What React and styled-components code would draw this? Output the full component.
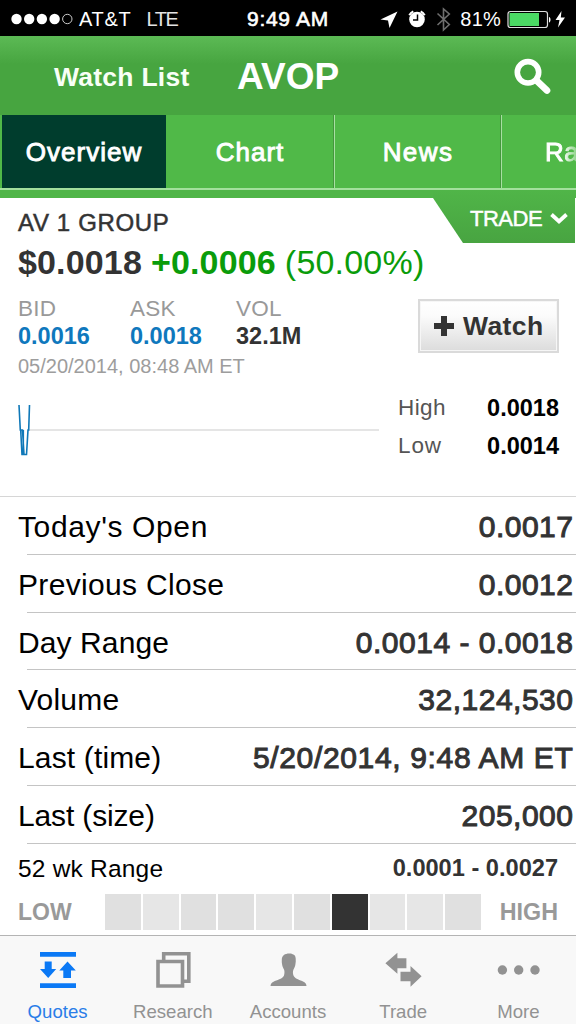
import React from "react";
import styled, { createGlobalStyle } from "styled-components";

const Global = createGlobalStyle`
  * { box-sizing: border-box; }
  body { margin: 0; background: #fff; font-family: "Liberation Sans", Arial, sans-serif; }
`;

const Screen = styled.div`
  width: 576px;
  height: 1024px;
  display: flex;
  flex-direction: column;
  overflow: hidden;
  background: #fff;
`;

const Label = styled.span`
  display: block;
  white-space: nowrap;
  font-size: ${(p) => p.$size}px;
  line-height: ${(p) => p.$line || 30}px;
  font-weight: ${(p) => (p.$bold ? 700 : 400)};
  color: ${(p) => p.$color || "#000"};
  letter-spacing: ${(p) => p.$track || 0}px;
  -webkit-text-stroke: ${(p) => p.$stroke || 0}px ${(p) => p.$color || "#000"};
`;

const StatusBar = styled.div`
  height: 36px;
  flex: none;
  background: #000;
  display: grid;
  grid-template-columns: 247px 1fr auto;
  padding: 1px 9px 0 0;
`;

const StatusGroup = styled.div`
  display: flex;
  align-items: center;
  padding-left: ${(p) => p.$inset || 0}px;
  gap: ${(p) => p.$gap || 0}px;
`;

const Header = styled.header`
  height: 79px;
  flex: none;
  display: flex;
  padding: 0 25px 0 54px;
  background: linear-gradient(#5cba55 0, #50ae49 16px, #47a540 28px, #47a540 100%);
`;

const BackLink = styled.div`
  width: 183px;
  padding-top: 26px;
`;

const Title = styled.div`
  flex: 1;
  padding-top: 25px;
`;

const Search = styled.svg`
  margin-top: 22px;
`;

const Tabs = styled.nav`
  height: 75px;
  flex: none;
  display: flex;
  overflow: hidden;
  padding-left: 2px;
  background: #50b948;
  border-bottom: 2px solid #a3e09d;
`;

const Tab = styled.div`
  width: ${(p) => p.$width}px;
  flex: none;
  display: flex;
  justify-content: ${(p) => (p.$start ? "flex-start" : "center")};
  padding: 22px 0 0 ${(p) => p.$inset || 0}px;
  background: ${(p) => (p.$active ? "#003d2d" : "transparent")};
  border-left: ${(p) => (p.$divided ? "1px solid #a8dfa3" : "none")};
  box-shadow: ${(p) => (p.$divided ? "-1px 0 0 #43983c" : "none")};
`;

const Fade = styled.div`
  mask-image: linear-gradient(90deg, #000 18px, rgba(0, 0, 0, 0.25) 34px);
`;

const TradeStrip = styled.div`
  height: 8px;
  flex: none;
  background: #50b548;
  display: flex;
  justify-content: flex-end;
  align-items: flex-start;
`;

const TradeTab = styled.div`
  width: 142px;
  height: 53px;
  flex: none;
  margin-right: 1px;
  padding: 14px 7px 0 37px;
  display: flex;
  align-items: flex-start;
  justify-content: space-between;
  background: linear-gradient(#50b548, #48a441);
  clip-path: polygon(0 0, 100% 0, 100% 100%, 30px 100%, 0 8px);
`;

const Chevron = styled.svg`
  margin-top: 9px;
`;

const Quote = styled.section`
  height: 299px;
  flex: none;
  padding: 10px 17px 0 18px;
  border-bottom: 1px solid #d6d6d6;
`;

const PriceLine = styled.div`
  display: flex;
  height: 46px;
  gap: 9px;
  padding-top: 1px;
`;

const Detail = styled.div`
  display: flex;
  justify-content: space-between;
  align-items: flex-start;
  height: 98px;
`;

const Stats = styled.div`
  display: grid;
  grid-template-columns: 112px 106px auto;
  padding-top: 12px;
`;

const WatchButton = styled.button`
  width: 141px;
  height: 54px;
  margin-top: 15px;
  padding: 0 0 0 14px;
  display: flex;
  align-items: center;
  gap: 9px;
  border: 2px solid #dadada;
  background: linear-gradient(#fff 0, #fbfbfb 30%, #dcdcdc 100%);
  box-shadow: inset 0 0 0 1px #f6f6f6;
  font-family: inherit;
`;

const ChartRow = styled.div`
  display: flex;
  justify-content: space-between;
  align-items: flex-start;
  padding-top: 8px;
`;

const HighLow = styled.dl`
  width: 161px;
  margin: 3px 0 0;
  display: grid;
  grid-template-columns: 1fr auto;
  row-gap: 8px;
`;

const Rows = styled.section`
  flex: none;
  padding-left: 18px;
`;

const Row = styled.div`
  height: 57.75px;
  display: flex;
  justify-content: space-between;
  padding: 15px 2.5px 0 0;
  background: linear-gradient(#c4c4c4, #c4c4c4) 9px 100% / 100% 1px no-repeat;
`;

const RangeHead = styled.div`
  display: flex;
  justify-content: space-between;
  flex: none;
  height: 50px;
  padding: 9px 18px 0 18px;
`;

const RangeBar = styled.div`
  display: flex;
  flex: 1;
  padding: 0 18px 0 18px;
`;

const Low = styled.div`
  width: 87px;
`;

const Cells = styled.div`
  display: grid;
  grid-template-columns: repeat(10, 1fr);
  gap: 2px;
  width: 376px;
  height: 36px;
  margin-right: auto;
`;

const Cell = styled.div`
  background: ${(p) => (p.$on ? "#333" : p.$alt ? "#e6e6e6" : "#e0e0e0")};
`;

const TabBar = styled.nav`
  height: 89px;
  flex: none;
  display: grid;
  grid-template-columns: repeat(5, 1fr);
  background: #f8f8f8;
  border-top: 1px solid #b4b4b4;
`;

const TabItem = styled.div`
  display: flex;
  flex-direction: column;
  align-items: center;
  padding-top: 12px;
`;

const rows = [
  ["Today's Open", "0.0017", 0.62],
  ["Previous Close", "0.0012", 0.33],
  ["Day Range", "0.0014 - 0.0018", 0.1],
  ["Volume", "32,124,530", 0.2],
  ["Last (time)", "5/20/2014, 9:48 AM ET", 0.15, 0.65],
  ["Last (size)", "205,000", -0.15],
];

const gray = "#929292";

const tabIcons = {
  Quotes: (
    <path
      fill="#0b79f5"
      d="M2 4h36v4.700H2zM2 35.200h36v4.700H2zM6.700 13.500h7v7.500h4.500L10.200 30 2 21h4.700zM25.300 30v-7.500h-4L29.500 13.500 37.800 22.500H33V30z"
    />
  ),
  Research: (
    <g fill="none" stroke={gray} strokeWidth="3.600">
      <path d="M10.700 12V5.800H35.800V33.300H30" />
      <path d="M5 13.500h24.500V38H5z" />
    </g>
  ),
  Accounts: (
    <path
      fill={gray}
      d="M23 5.500c-5-.6-9.300 1.200-9.200 6.500 0 1-.1 2.500.3 4.500.4 2.500 1.300 3.500 2.100 5.500.5 2 .3 4-.4 6C14 31 9 32 5.500 33.700 3.500 34.700 2.600 36 2.500 38h36c-.1-2-1-3.300-3-4.300-3.500-1.700-8-2.700-9.800-5.700-.9-2-1-4-.4-6 .8-2 1.700-3 2.100-5.500.4-2 .5-4 .3-6-.2-2.500-1.200-4-3-4.200z"
    />
  ),
  Trade: (
    <path
      fill={gray}
      d="M2.400 15.300 14.400 4.700v5.600h9v10h-9v5.400zM38.600 28.200 27.500 18v5.700h-10v9.500h10v5.500z"
    />
  ),
  More: (
    <g fill={gray}>
      <circle cx="4.400" cy="22" r="4.700" />
      <circle cx="20.700" cy="22" r="4.700" />
      <circle cx="37" cy="22" r="4.700" />
    </g>
  ),
};

export default function App() {
  return (
    <Screen>
      <Global />
      <StatusBar>
        <StatusGroup $inset={11} $gap={6}>
          <svg width="62" height="12" viewBox="0 0 62 12">
            {[0, 1, 2, 3].map((i) => (
              <circle key={i} cx={5.5 + i * 12.7} cy="6" r="5.2" fill="#fff" />
            ))}
            <circle cx="56.3" cy="6" r="4.7" fill="none" stroke="#ccc" strokeWidth="1" />
          </svg>
          <Label $size={20} $color="#fff" $track={0.7}>AT&amp;T</Label>
          <StatusGroup $inset={9}>
            <Label $size={20} $color="#e4e4e4" $track={-1.4}>LTE</Label>
          </StatusGroup>
        </StatusGroup>
        <StatusGroup>
          <Label $size={21} $color="#fff" $stroke={0.6} $track={0.7}>9:49 AM</Label>
        </StatusGroup>
        <StatusGroup>
          <svg width="80" height="28" viewBox="378 4 80 28">
            <path d="M378.500 18.500 395.500 10.500 387.500 27 386 19.500z" fill="#fff" />
            <circle cx="415" cy="18.500" r="7.800" fill="#fff" />
            <path d="M407.300 14.200a9 9 0 0 1 4-3.800M422.700 14.200a9 9 0 0 0-4-3.800" stroke="#fff" strokeWidth="2" fill="none" />
            <path d="M415.500 13.500v5.500h-4.500" stroke="#000" strokeWidth="1.500" fill="none" />
            <path d="M435.500 12.500 447.300 23.500 441.500 29V8L447.300 13 435.500 24" stroke="#6e6e6e" strokeWidth="1.600" fill="none" />
          </svg>
          <Label $size={20} $color="#fff" $track={0.2}>81%</Label>
          <svg width="66" height="28" viewBox="502 4 66 28">
            <rect x="509" y="10.5" width="39.500" height="16" rx="2.500" fill="none" stroke="#ddd" strokeWidth="1.200" />
            <rect x="510.500" y="12" width="29.500" height="13" fill="#4bd964" />
            <path d="M550 16c2 .5 2 5 0 5.500z" fill="#fff" />
            <path d="M562.500 10 556.500 19h4L559 26.500 566 16.500h-4.200z" fill="#fff" />
          </svg>
        </StatusGroup>
      </StatusBar>

      <Header>
        <BackLink>
          <Label $size={26.5} $bold $color="#f8fff6" $track={0.25}>Watch List</Label>
        </BackLink>
        <Title>
          <Label $size={37} $line={32} $bold $color="#fff">AVOP</Label>
        </Title>
        <Search width="38" height="38" viewBox="513 58 38 38">
          <circle cx="528" cy="72.300" r="10.700" fill="none" stroke="#fff" strokeWidth="5.600" />
          <path d="M536.500 80.500l10.500 10" stroke="#fff" strokeWidth="6.600" strokeLinecap="round" />
        </Search>
      </Header>

      <Tabs>
        <Tab $active $width={164}>
          <Label $size={26} $color="#fff" $stroke={0.9} $track={1}>Overview</Label>
        </Tab>
        <Tab $width={168}>
          <Label $size={26} $color="#fff" $stroke={0.9} $track={1}>Chart</Label>
        </Tab>
        <Tab $divided $width={167}>
          <Label $size={26} $color="#fff" $stroke={0.9} $track={1.4}>News</Label>
        </Tab>
        <Tab $divided $start $inset={43} $width={167}>
          <Fade>
            <Label $size={26} $color="#fff" $stroke={0.9} $track={0.5}>Ra</Label>
          </Fade>
        </Tab>
      </Tabs>

      <TradeStrip>
        <TradeTab>
          <Label $size={22} $color="#fff" $stroke={0.5} $track={-0.5}>TRADE</Label>
          <Chevron width="18" height="12" viewBox="0 0 18 12">
            <path d="M1.500 1.500 9 8.500 16.500 1.500" fill="none" stroke="#fff" strokeWidth="3.800" />
          </Chevron>
        </TradeTab>
      </TradeStrip>

      <Quote>
        <Label $size={24} $color="#333" $stroke={0.5} $track={0.65}>AV 1 GROUP</Label>
        <PriceLine>
          <Label $size={34} $line={46} $bold $color="#333" $track={0.15}>$0.0018</Label>
          <Label $size={34} $line={46} $bold $color="#0a9c0a" $track={0.15}>+0.0006</Label>
          <Label $size={34} $line={46} $color="#0a9c0a" $track={0.2}>(50.00%)</Label>
        </PriceLine>
        <Detail>
          <div>
            <Stats>
              {[["BID", "0.0016", "#0f78bd"], ["ASK", "0.0018", "#0f78bd"], ["VOL", "32.1M", "#333"]].map(([k, v, c]) => (
                <div key={k}>
                  <Label $size={22.5} $line={26} $color="#999" $track={0.2}>{k}</Label>
                  <Label $size={23.5} $line={28} $bold $color={c}>{v}</Label>
                </div>
              ))}
            </Stats>
            <Label $size={20} $line={32} $color="#9d9d9d">05/20/2014, 08:48 AM ET</Label>
          </div>
          <WatchButton>
            <svg width="20" height="20" viewBox="0 0 20 20">
              <path d="M10 0v20M0 10h20" stroke="#333" strokeWidth="6" />
            </svg>
            <Label $size={26.5} $bold $color="#333" $track={0.4}>Watch</Label>
          </WatchButton>
        </Detail>
        <ChartRow>
          <svg width="361" height="80" viewBox="17 390 361 80">
            <path d="M28 430H378" stroke="#ddd" strokeWidth="1.600" />
            <path d="M18 405 19.300 430H21.500L23 454.500H25.500L27 430H27.700L28.500 405M19.700 430 21 454.500h4.500M22.300 430v24" fill="none" stroke="#0f78b8" strokeWidth="1.600" />
          </svg>
          <HighLow>
            <Label as="dt" $size={22.5} $color="#555" $track={0.4}>High</Label>
            <Label $size={23.5} $bold>0.0018</Label>
            <Label as="dt" $size={22.5} $color="#555" $track={0.9}>Low</Label>
            <Label $size={23.5} $bold>0.0014</Label>
          </HighLow>
        </ChartRow>
      </Quote>

      <Rows>
        {rows.map(([k, v, track, valueTrack = 0.5]) => (
          <Row key={k}>
            <Label $size={30} $track={track}>{k}</Label>
            <Label $size={30} $stroke={1} $track={valueTrack} $color="#333">{v}</Label>
          </Row>
        ))}
      </Rows>
      <RangeHead>
        <Label $size={24.5} $line={32} $track={0.2}>52 wk Range</Label>
        <Label $size={23.6} $bold $color="#333">0.0001 - 0.0027</Label>
      </RangeHead>
      <RangeBar>
        <Low>
          <Label $size={23} $line={36} $bold $color="#999">LOW</Label>
        </Low>
        <Cells>
          {Array.from({ length: 10 }, (_, i) => (
            <Cell key={i} $on={i === 6} $alt={[1, 4, 7, 8].includes(i)} />
          ))}
        </Cells>
        <Label $size={23.3} $line={36} $bold $color="#999">HIGH</Label>
      </RangeBar>

      <TabBar>
        {Object.entries(tabIcons).map(([name, icon]) => (
          <TabItem key={name}>
            <svg width="44" height="44" viewBox="-2 0 44 44">{icon}</svg>
            <Label $size={18.6} $line={39} $color={name === "Quotes" ? "#2a7de8" : gray}>{name}</Label>
          </TabItem>
        ))}
      </TabBar>
    </Screen>
  );
}
